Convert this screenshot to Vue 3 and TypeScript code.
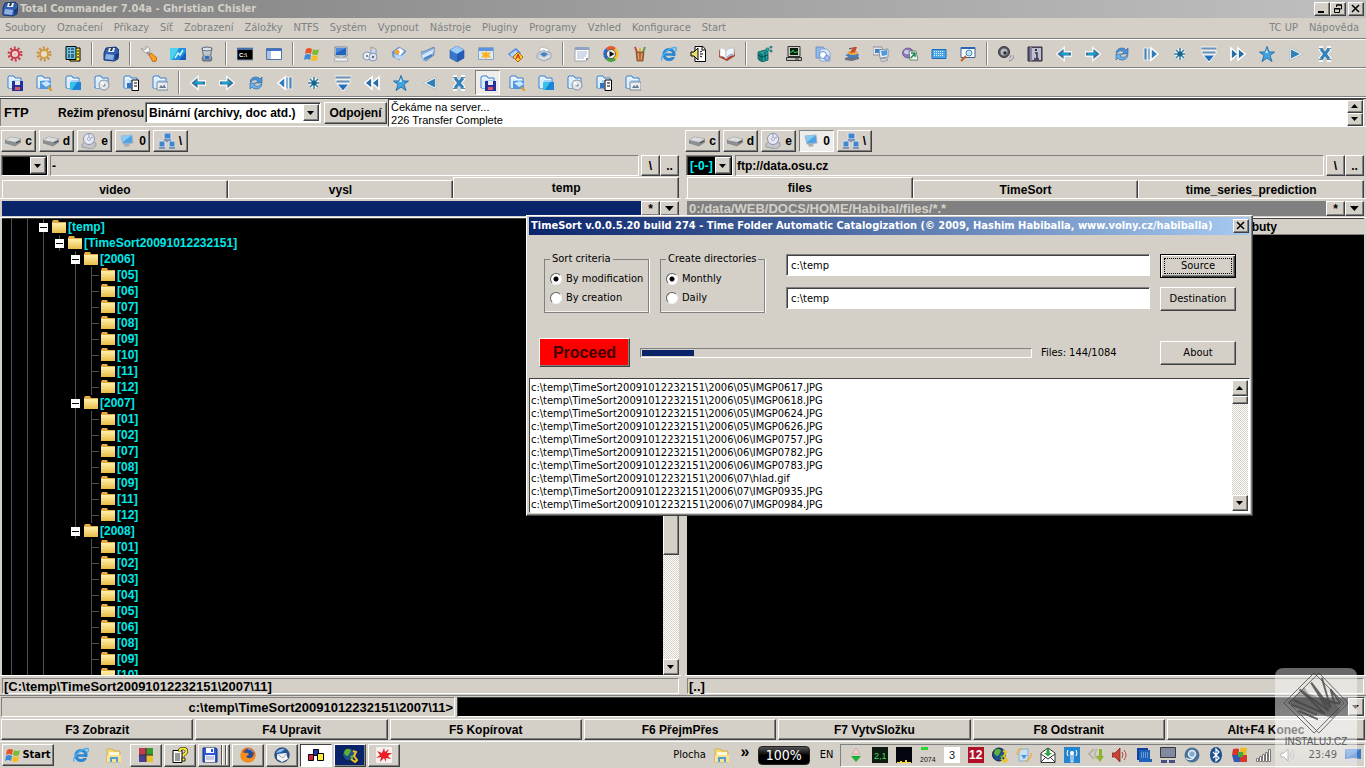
<script setup lang="ts">
import { ref, computed } from 'vue'

interface TreeNode {
  label: string
  depth: number
  guides: number[]
}
interface Badge {
  text: string
  x: number
  y: number
  size: number
  fill: string
  weight?: string
}

const menus = ['Soubory', 'Označení', 'Příkazy', 'Síť', 'Zobrazení', 'Záložky', 'NTFS', 'Systém', 'Vypnout', 'Nástroje', 'Pluginy', 'Programy', 'Vzhled', 'Konfigurace', 'Start']
const helpMenus = ['TC UP', 'Nápověda']

const toolbarTop: string[][] = [
  ['gear-red', 'gear-gold', 'notes'],
  ['floppy-tc'],
  ['wrench', 'picture', 'bin'],
  ['cmd', 'window'],
  ['flag', 'computer', 'discs', 'papers', 'folder-blue', 'cube', 'win-star', 'scan', 'printer'],
  ['notepad', 'media', 'pencils', 'ie', 'sound', 'book'],
  ['cubes', 'term', 'docs', 'stack', 'screens', 'gems', 'keyboard', 'find'],
  ['speaker', 'cabinet', 'left', 'right', 'refresh', 'bar-play', 'spark', 'drop', 'ff', 'star', 'play', 'cross'],
]
const folders = ['f-floppy', 'f-find', 'f-desk', 'f-disc', 'f-doc', 'f-img']
const toolbarBottom: string[][] = [
  folders,
  ['left', 'right', 'refresh', 'bar-rev', 'spark', 'drop', 'rw', 'star', 'rev', 'cross', ...folders],
]

const drives = [
  { icon: 'hdd', label: 'c' },
  { icon: 'hdd', label: 'd' },
  { icon: 'cdrom', label: 'e' },
  { icon: 'globe', label: '0' },
  { icon: 'net', label: '\\' },
]

const panels = [
  { key: 'l', drive: '', volume: '-', tabs: ['video', 'vysl', 'temp'], active: 2, path: '', pressed: -1, status: '[C:\\temp\\TimeSort20091012232151\\2007\\11]' },
  { key: 'r', drive: '[-0-]', volume: 'ftp://data.osu.cz', tabs: ['files', 'TimeSort', 'time_series_prediction'], active: 0, path: '0:/data/WEB/DOCS/HOME/Habibal/files/*.*', pressed: 3, status: '[..]' },
]

const years: [string, string[]][] = [
  ['2006', ['05', '06', '07', '08', '09', '10', '11', '12']],
  ['2007', ['01', '02', '07', '08', '09', '11', '12']],
  ['2008', ['01', '02', '03', '04', '05', '06', '08', '09', '10']],
]
const tree: TreeNode[] = [
  { label: '[temp]', depth: 0, guides: [0, 1, 2] },
  { label: '[TimeSort20091012232151]', depth: 1, guides: [0, 1, 2, 3] },
]
years.forEach(([year, months], i) => {
  tree.push({ label: `[${year}]`, depth: 2, guides: [0, 1, 2, 4] })
  const guides = i < years.length - 1 ? [0, 1, 2, 4, 5] : [0, 1, 2, 5]
  months.forEach((m) => tree.push({ label: `[${m}]`, depth: 3, guides }))
})

const mode = ref('Binární (archivy, doc atd.)')
const log = ref('Čekáme na server...\n226 Transfer Complete')
const command = ref('')
const fkeys = ['F3 Zobrazit', 'F4 Upravit', 'F5 Kopírovat', 'F6 PřejmPřes', 'F7 VytvSložku', 'F8 Odstranit', 'Alt+F4 Konec']

const criteria = ref('By modification')
const period = ref('Monthly')
const source = ref('c:\\temp')
const destination = ref('c:\\temp')
const done = ref(144)
const total = ref(1084)
const progress = computed(() => `${(done.value / total.value) * 100}%`)
const sorted = ['05\\IMGP0617.JPG', '05\\IMGP0618.JPG', '05\\IMGP0624.JPG', '05\\IMGP0626.JPG', '06\\IMGP0757.JPG', '06\\IMGP0782.JPG', '06\\IMGP0783.JPG', '07\\hlad.gif', '07\\IMGP0935.JPG', '07\\IMGP0984.JPG'].map((f) => `c:\\temp\\TimeSort20091012232151\\2006\\${f}`)

const tasks = [
  { icon: 'squares', cls: '' },
  { icon: 'help', cls: '' },
  { icon: 'floppy', cls: 'stacked' },
  { icon: 'firefox', cls: '' },
  { icon: 'bird', cls: '' },
  { icon: 'boxes', cls: 'on' },
  { icon: 'earth', cls: 'navy' },
  { icon: 'splat', cls: '' },
]
const tray = ['updown', 'meter', 'graph', 'fan', 'three', 'twelve', 'earth', 'sync', 'mail', 'wifi', 'transfer', 'vol-red', 'chip', 'dual', 'swirl', 'bt', 'shield', 'signal', 'vol']

// Short readings drawn on top of an icon's background
const badges: Record<string, Badge> = {
  cmd: { text: 'C:\\', x: 2, y: 11, size: 6, fill: '#fff', weight: 'bold' },
  meter: { text: '2,1', x: 2, y: 12, size: 9, fill: '#3fdc5a' },
  fan: { text: '2074', x: 0, y: 15, size: 7, fill: '#111' },
  three: { text: '3', x: 5, y: 12, size: 11, fill: '#222' },
  twelve: { text: '12', x: 1, y: 12, size: 12, fill: '#fff', weight: 'bold' },
}
</script>

<template>
  <svg class="defs" width="0" height="0" aria-hidden="true">
    <defs>
      <linearGradient id="gb" x1="0" y1="0" x2="1" y2="1"><stop offset="0" stop-color="#c4e6fb" /><stop offset="1" stop-color="#1f6fc0" /></linearGradient>
      <linearGradient id="gy" x1="0" y1="0" x2="0" y2="1"><stop offset="0" stop-color="#fff0a8" /><stop offset="1" stop-color="#e9bd4c" /></linearGradient>
      <linearGradient id="gg" x1="0" y1="0" x2="0" y2="1"><stop offset="0" stop-color="#f8f8f8" /><stop offset="1" stop-color="#77808c" /></linearGradient>
    </defs>

    <symbol id="gear-red" viewBox="0 0 16 16"><circle cx="8" cy="8" r="6" fill="none" stroke="#c93c4c" stroke-width="3" stroke-dasharray="1.9 1.87" /><circle cx="8" cy="8" r="4" fill="#f6dede" stroke="#c93c4c" stroke-width="2" /><circle cx="8" cy="8" r="1.6" fill="#e9b5b9" /></symbol>
    <symbol id="gear-gold" viewBox="0 0 16 16"><circle cx="8" cy="8" r="6" fill="none" stroke="#c68f3e" stroke-width="3" stroke-dasharray="1.9 1.87" /><circle cx="8" cy="8" r="4" fill="#e8dfcc" stroke="#d49d45" stroke-width="2" /></symbol>
    <symbol id="notes" viewBox="0 0 16 16"><path d="M5 2h10v13H5z" fill="#ffe83a" stroke="#000" /><path d="M1 .5h10v13H1z" fill="#6bc6ec" stroke="#000" /><path d="M3 3h2m1 0h3M3 6h2m1 0h3M3 9h2m1 0h3M3 11h2m1 0h3M12 5h2m-2 3h2m-2 3h2" stroke="#111" /></symbol>
    <symbol id="floppy-tc" viewBox="0 0 16 16"><path d="M3 2l10-1 3 3-1 9-4 2-10-1 0-7z" fill="#2f5fae" stroke="#1a3573" /><path d="M6 2h6l-1 4H5z" fill="#e5edf6" /><path d="M8 2h2l-1 3H7z" fill="#333" /><path d="M3 8l8 1-1 5-8-1z" fill="#8fb1e4" /><path d="M12 9l3-2v4l-3 3z" fill="#173a83" /></symbol>
    <symbol id="floppy" viewBox="0 0 16 16"><path d="M1 1h13l1 1v13H1z" fill="#2a58d8" stroke="#102c8a" /><path d="M4 1h8v5H4z" fill="#fff" /><path d="M9 2h2v3H9z" fill="#2a58d8" /><path d="M3 8h10v7H3z" fill="#f2f2f2" /><path d="M4 10h8M4 12h8" stroke="#96a5cc" /></symbol>
    <symbol id="wrench" viewBox="0 0 16 16"><path d="M0 2l3 2 2-1 0-3 3 2 1 3-1 2-3 0-3-2z" fill="#f7f7f7" stroke="#888" stroke-width=".7" /><path d="M6 6l3 3" stroke="#999" stroke-width="2.500" /><path d="M8 9l2-2 6 5-1 3-3 1z" fill="#ff9e1e" stroke="#b65c06" stroke-width=".8" /></symbol>
    <symbol id="picture" viewBox="0 0 16 16"><path d="M0 2h16v12H0z" fill="#2190dc" /><path d="M0 2h9l-7 12H0z" fill="#4ad2ee" /><path d="M5 12l3-5 2 2 3-5" fill="none" stroke="#c9fbff" stroke-width="1.500" /><path d="M9 14l7-8v8z" fill="#135ec0" /></symbol>
    <symbol id="bin" viewBox="0 0 16 16"><path d="M3 2h10l-1 5q-1 2 1 6l-1 2H4l-1-2q2-4 1-6z" fill="url(#gg)" stroke="#5d6a7c" /><ellipse cx="8" cy="3" rx="5" ry="2" fill="#d9e3ee" stroke="#5d6a7c" /><path d="M6 10h4v3H6z" fill="#2b71c5" /></symbol>
    <symbol id="cmd" viewBox="0 0 16 16"><path d="M0 2h16v12H0z" fill="#000" stroke="#7e95b5" /><path d="M0 2h16v2H0z" fill="#4a6dac" /></symbol>
    <symbol id="window" viewBox="0 0 16 16"><path d="M.5 2.500h15v11H.5z" fill="#fff" stroke="#5374a8" /><path d="M1 3h14v2H1z" fill="#3d72ca" /><path d="M1 5h4v8H1z" fill="#a9c3ea" /></symbol>
    <symbol id="flag" viewBox="0 0 16 16"><path d="M2 3q3-2 6 0L7 8Q4 6 1 8z" fill="#e8532c" /><path d="M9 3q3 2 6 0l-1 5q-3 2-6 0z" fill="#7cbb35" /><path d="M1 9q3-2 6 0l-1 5q-3-2-6 0z" fill="#3c8ad8" /><path d="M8 9q3 2 6 0l-1 5q-3 2-6 0z" fill="#f8bc20" /></symbol>
    <symbol id="computer" viewBox="0 0 16 16"><path d="M2 1h12v9H2z" fill="#dfe5ec" stroke="#76849a" /><path d="M3 2h10v7H3z" fill="#2263bd" /><path d="M3 2h10L3 7z" fill="#4c8adb" /><path d="M6 10h4v2H6z" fill="#c2c8d0" /><path d="M2 12h12l1 3H1z" fill="#f5f5f5" stroke="#8c97a7" stroke-width=".7" /></symbol>
    <symbol id="discs" viewBox="0 0 16 16"><path d="M9 1l5 2v7l-5-2z" fill="#c6dbf5" stroke="#6a88b5" stroke-width=".7" /><circle cx="5" cy="10" r="4" fill="#f0f4fa" stroke="#8595ae" /><circle cx="11" cy="11" r="4" fill="#dce6f5" stroke="#8595ae" /><circle cx="5" cy="10" r="1.200" fill="#889" /><circle cx="11" cy="11" r="1.200" fill="#667" /><path d="M9 3l3-2 1 2z" fill="#e7b948" /></symbol>
    <symbol id="papers" viewBox="0 0 16 16"><path d="M1 6l7-5 7 4-6 9-7-3z" fill="#5d9de2" stroke="#6f86b5" stroke-width=".6" /><path d="M4 5l5-3 4 3-4 5z" fill="#fff" /><circle cx="6" cy="6" r="2.500" fill="#f0a540" /><path d="M3 8l7 2 5-3-5 7-6-2z" fill="#bad7f6" /></symbol>
    <symbol id="folder-blue" viewBox="0 0 16 16"><path d="M1 6l4-1 9-4v8l-8 6z" fill="#8dbdee" stroke="#53739f" stroke-width=".7" /><path d="M3 8l12-6-3 8-8 5-3-6z" fill="#d4e8fc" stroke="#6a93c9" stroke-width=".7" /><path d="M4 13l8-4" stroke="#3f7fca" stroke-width="2" /></symbol>
    <symbol id="cube" viewBox="0 0 16 16"><path d="M8 0l7 4v8l-7 4-7-4V4z" fill="#3776ca" stroke="#2558a0" stroke-width=".6" /><path d="M8 0l7 4-7 4-7-4z" fill="#9dccf5" /><path d="M8 8l7-4v8l-7 4z" fill="#245bb5" /></symbol>
    <symbol id="win-star" viewBox="0 0 16 16"><path d="M.5 1.500h15v12H.5z" fill="#dbe9fa" stroke="#8fa5c4" /><path d="M1 2h14v3H1z" fill="#5b93de" /><path d="M8 4l1 3 4-1-2 3 2 3-4-1-1 3-1-3-4 1 2-3-2-3 4 1z" fill="#ffb11a" /></symbol>
    <symbol id="scan" viewBox="0 0 16 16"><path d="M1 8l8-6 5 5-7 6z" fill="#4c85dc" stroke="#8da9d8" /><path d="M3 8l6-4 2 2-6 5z" fill="#bbd5f8" /><path d="M11 6l5 5-5 5-5-5z" fill="#ffcd35" stroke="#b06910" /><path d="M9 13l2-5 2 5M10 11h2" fill="none" stroke="#c02a12" /></symbol>
    <symbol id="printer" viewBox="0 0 16 16"><path d="M5 1l8 2-2 5-8-3z" fill="#fff" stroke="#99a4b5" stroke-width=".6" /><path d="M1 8l6-4 8 3v5l-7 3-7-3z" fill="#c9ced6" stroke="#8d939e" stroke-width=".6" /><path d="M4 8l4-2 4 2-4 3z" fill="#3f83c8" /><path d="M3 11l5 2 6-3" fill="none" stroke="#f5f5f5" /></symbol>
    <symbol id="notepad" viewBox="0 0 16 16"><path d="M1 2h14v10l-3 3H1z" fill="#fff" stroke="#a0a6b2" /><path d="M1 1h14v3H1z" fill="#8fa4c4" /><path d="M3 6h10M3 8h10M3 10h9M3 12h7" stroke="#a9b7d0" /><path d="M15 12h-3v3z" fill="#8a96ab" /></symbol>
    <symbol id="media" viewBox="0 0 16 16"><path d="M8 8L3 2a8 8 0 0 1 10 0z" fill="#e85b28" /><path d="M8 8l5-6a8 8 0 0 1 0 12z" fill="#f7bd27" /><path d="M8 8l5 6a8 8 0 0 1-10 0z" fill="#4aa33b" /><path d="M8 8l-5 6A8 8 0 0 1 3 2z" fill="#2d67c7" /><circle cx="8" cy="8" r="4.500" fill="#f4f6fb" stroke="#444" stroke-width=".8" /><path d="M6.500 5l5 3-5 3z" fill="#111" /></symbol>
    <symbol id="pencils" viewBox="0 0 16 16"><path d="M3 1l3 8" stroke="#c8442c" stroke-width="2" /><path d="M8 2v7" stroke="#e6b540" stroke-width="2" /><path d="M13 1l-3 8" stroke="#4f9f45" stroke-width="2" /><path d="M4 6l8 0-1 9H5z" fill="#b06a3a" stroke="#774427" stroke-width=".7" /><path d="M6 7l1 7M10 7l-1 7" stroke="#e9a36b" /></symbol>
    <symbol id="ie" viewBox="0 0 16 16"><circle cx="8" cy="8.500" r="5" fill="none" stroke="#2b86d3" stroke-width="3.200" /><path d="M4 8.500h9" stroke="#2b86d3" stroke-width="2.500" /><path d="M10 11h6v-1H10z" fill="#d4d0c8" /><path d="M1 14.500C-1 12 6 2 14 1.500c3 .5 1 3 0 4" fill="none" stroke="#4eb0ef" stroke-width="1.400" /></symbol>
    <symbol id="sound" viewBox="0 0 16 16"><path d="M5 .5h8l2.500 3v12H5z" fill="#fff" stroke="#000" /><path d="M12 1v3h3" fill="none" stroke="#000" /><path d="M1 6h3l4-4v12l-4-4H1z" fill="#e8e06c" stroke="#000" /><path d="M10 6l2-1m-2 3h3m-3 2l2 1" stroke="#000" /></symbol>
    <symbol id="book" viewBox="0 0 16 16"><path d="M0 4l7 3 8-4 1 7-8 5-8-4z" fill="#ad3d2d" /><path d="M1 2q4-1 6 3v8q-2-3-6-3z" fill="#fff" stroke="#a8a8b4" stroke-width=".6" /><path d="M7 5q3-4 8-3v7q-4 0-8 4z" fill="#eef4fb" stroke="#a8a8b4" stroke-width=".6" /><path d="M8 11q3-3 6-3" stroke="#7da0c8" fill="none" /></symbol>
    <symbol id="cubes" viewBox="0 0 16 16"><path d="M1 6l7-2 3 2v8l-6 2-4-3z" fill="#20a0a0" stroke="#07504f" stroke-width=".8" /><path d="M1 9l4 2 6-2M3 7v8M8 6v8M5 8v7" stroke="#06403f" stroke-width=".8" fill="none" /><path d="M9 2h3v3H9zM13 0h2v2h-2zM13 4h2v2h-2z" fill="#2cb8b4" stroke="#07504f" stroke-width=".5" /></symbol>
    <symbol id="term" viewBox="0 0 16 16"><path d="M2 .5h12v10H2z" fill="#d0cfc8" stroke="#333" /><path d="M4 2h8v7H4z" fill="#031c0b" /><path d="M4 6h2l1-2 2 3 1-1h2" fill="none" stroke="#27d058" /><path d="M.5 11.500h15v3H.5z" fill="#c2c1bb" stroke="#333" /><path d="M9 13h4" stroke="#333" /></symbol>
    <symbol id="docs" viewBox="0 0 16 16"><path d="M1 1h7l2 2v9H1z" fill="#8ebbec" stroke="#5880bb" stroke-width=".7" /><path d="M5 3h7l3 3v9H5z" fill="#d9e7fa" stroke="#7795c5" stroke-width=".7" /><circle cx="8" cy="9" r="3.500" fill="#fff" stroke="#6a94d0" /><circle cx="12" cy="12" r="2.500" fill="#a8bff0" stroke="#5579bb" stroke-width=".7" /></symbol>
    <symbol id="stack" viewBox="0 0 16 16"><path d="M1 12l6-2 8 1v2l-7 2-7-1z" fill="#6c7280" /><path d="M1 9l6-2 8 1-1 3-7 1z" fill="#3e7fc8" /><path d="M3 6l6-2 5 2-2 3-6 0z" fill="#e8a13a" /><path d="M9 1l4 0-2 5-5 1z" fill="#c44a31" /><path d="M5 3l3-1" stroke="#444" /></symbol>
    <symbol id="screens" viewBox="0 0 16 16"><path d="M0 1h9v8H0z" fill="#e3e6ec" stroke="#7a828f" stroke-width=".8" /><path d="M2 3h6v4H2z" fill="#3b85cb" /><path d="M6 4l9-1v8l-8 1z" fill="#eef0f4" stroke="#7a828f" stroke-width=".8" /><path d="M8 5l6-1v5l-5 1z" fill="#4d9ade" /><path d="M7 13l6-1 2 2-6 2z" fill="#cbd0d8" stroke="#7a828f" stroke-width=".6" /></symbol>
    <symbol id="gems" viewBox="0 0 16 16"><ellipse cx="6" cy="7" rx="5.500" ry="5" fill="#8f78b9" stroke="#5d4a82" stroke-width=".7" /><ellipse cx="5" cy="6" rx="3" ry="2" fill="#d5c8ee" /><path d="M7 5h7l2 9H8z" fill="#f2f6f4" stroke="#49705a" stroke-width=".8" /><path d="M9 12l4-5m0 0v4m0-4H9" stroke="#238a53" stroke-width="1.500" fill="none" /></symbol>
    <symbol id="keyboard" viewBox="0 0 16 16"><path d="M1 3.500h14v9H1z" fill="#4fa6e6" stroke="#1f6cb4" /><path d="M3 5.500h10M3 7.500h10M3 9.500h10" stroke="#e1f3ff" stroke-dasharray="1 1" /></symbol>
    <symbol id="find" viewBox="0 0 16 16"><path d="M1 1.500h14v10H1z" fill="#fff" stroke="#40608f" /><path d="M1 1h14v2H1z" fill="#2d63b3" /><circle cx="9" cy="7" r="3" fill="#c1e4fa" stroke="#4889bf" /><path d="M6 10l-5 5" stroke="#c2612a" stroke-width="2" /></symbol>
    <symbol id="speaker" viewBox="0 0 16 16"><ellipse cx="6" cy="6" rx="5.500" ry="5.500" fill="#55585f" stroke="#34363b" /><circle cx="6" cy="6" r="3.500" fill="#b5b8be" /><circle cx="7" cy="7" r="1.700" fill="#2a2b30" /><path d="M11 12q2 0 2-3M11 15q5-1 5-6" stroke="#8989a8" fill="none" /></symbol>
    <symbol id="cabinet" viewBox="0 0 16 16"><path d="M1 1h14v14H1z" fill="#5c5774" stroke="#302e40" /><path d="M4 1v14" stroke="#b6b3c8" /><path d="M5 2h9v12H5z" fill="#c0bfd0" /><path d="M8 7h2v6m-3 0h5" stroke="#333044" stroke-width="1.500" fill="none" /><path d="M8 3h2v2H8z" fill="#333044" /></symbol>
    <symbol id="left" viewBox="0 0 16 16"><path d="M1 8l7-6v4h7v4H8v4z" fill="#fff" stroke="#f2f4f6" stroke-width="2" /><path d="M1.500 8l6-5v3.500H15v3H7.500V13z" fill="#3d6c98" /><path d="M4 8l3-3v2h6v2H6z" fill="#0aa6cb" /></symbol>
    <symbol id="right" viewBox="0 0 16 16"><path d="M15 8L8 2v4H1v4h7v4z" fill="#fff" stroke="#f2f4f6" stroke-width="2" /><path d="M14.500 8l-6-5v3.500H1v3h7.500V13z" fill="#3d6c98" /><path d="M12 8L9 5v2H3v2h7z" fill="#0aa6cb" /></symbol>
    <symbol id="refresh" viewBox="0 0 16 16"><path d="M2 7q1-5 6-5 3 0 4 2l2-2v6H8l2-2q-4-3-7 1z" fill="#4f92d2" stroke="#2561a0" stroke-width=".6" /><path d="M14 9q-1 5-6 5-3 0-4-2l-2 2V8h6l-2 2q4 3 7-1z" fill="#6db0e6" stroke="#2561a0" stroke-width=".6" /></symbol>
    <symbol id="bar-play" viewBox="0 0 16 16"><path d="M1 2h3v12H1zM5 2h2v12H5z" fill="#4d87b5" stroke="#fff" stroke-width=".7" /><path d="M8 2l7 6-7 6z" fill="#2f7cba" stroke="#fff" stroke-width="1.500" /></symbol>
    <symbol id="bar-rev" viewBox="0 0 16 16"><path d="M12 2h3v12h-3zM9 2h2v12H9z" fill="#4d87b5" stroke="#fff" stroke-width=".7" /><path d="M8 2L1 8l7 6z" fill="#2f7cba" stroke="#fff" stroke-width="1.500" /></symbol>
    <symbol id="spark" viewBox="0 0 16 16"><path d="M8 2v12M2 8h11M4 4l8 8M12 4l-8 8" stroke="#f8f8f8" stroke-width="3" /><path d="M8 2v12M2 8h11M4 4l8 8M12 4l-8 8" stroke="#327ba3" stroke-width="1.500" /><circle cx="8" cy="8" r="2.500" fill="#14658c" /></symbol>
    <symbol id="drop" viewBox="0 0 16 16"><path d="M0 1h16v3H0zM1 5h14v3H1z" fill="#6f93b5" stroke="#fff" stroke-width=".8" /><path d="M2 9h12l-6 7z" fill="#2471bb" stroke="#fff" /></symbol>
    <symbol id="ff" viewBox="0 0 16 16"><path d="M1 2l7 6-7 6zM8 2l7 6-7 6z" fill="#6cb3e0" stroke="#fff" stroke-width="1.500" /><path d="M2 4l5 4-5 4zM9 4l5 4-5 4z" fill="#2a6ca4" /></symbol>
    <symbol id="rw" viewBox="0 0 16 16"><path d="M15 2L8 8l7 6zM8 2L1 8l7 6z" fill="#6cb3e0" stroke="#fff" stroke-width="1.500" /><path d="M14 4L9 8l5 4zM7 4L2 8l5 4z" fill="#2a6ca4" /></symbol>
    <symbol id="star" viewBox="0 0 16 16"><path d="M8 .5l2 5.500h5.500l-4.500 3.500L13 15.500l-5-3.500-5 3.500 2-6L.5 6H6z" fill="#41a5e0" stroke="#1f6aa6" stroke-width=".9" /><path d="M8 3l1 4H6z" fill="#c5ecff" /></symbol>
    <symbol id="play" viewBox="0 0 16 16"><path d="M2 1.500l13 6.500-13 6.500z" fill="#fff" stroke="#b4bcc6" /><path d="M3 3.500l9 4.500-9 4.500z" fill="#3180b8" /></symbol>
    <symbol id="rev" viewBox="0 0 16 16"><path d="M14 1.500L1 8l13 6.500z" fill="#fff" stroke="#b4bcc6" /><path d="M13 3.500L4 8l9 4.500z" fill="#3180b8" /></symbol>
    <symbol id="cross" viewBox="0 0 16 16"><path d="M3 3l10 10M13 3L3 13M2 2h4M10 2h4M2 14h4M10 14h4" stroke="#f6f9fb" stroke-width="4.500" /><path d="M4 3l8 10M12 3L4 13" stroke="#3281b8" stroke-width="3" /><path d="M2 2.500h4M10 2.500h4M2 13.500h4M10 13.500h4" stroke="#5689ae" /></symbol>

    <symbol id="f-base" viewBox="0 0 16 16"><path d="M1 2l1-1h5l1 2h6v10H1z" fill="#eaf5fe" stroke="#3b7fcb" /><path d="M2 5h11v8H2z" fill="#a9d2f6" /><path d="M2 5l4-2v10H2z" fill="#d9edfd" /></symbol>
    <symbol id="f-floppy" viewBox="0 0 16 16"><use href="#f-base" /><path d="M5 6h11v10H5z" fill="#25319a" /><path d="M8 6h5v4H8z" fill="#e9e9f2" /><path d="M8 12h5v3H8z" fill="#e05762" /></symbol>
    <symbol id="f-find" viewBox="0 0 16 16"><use href="#f-base" /><path d="M4 6h11v8H4z" fill="#4e98dd" /><path d="M5 8l6-2 4 3-5 3z" fill="#c7e6ff" /><path d="M12 12l4 4" stroke="#e39b1c" stroke-width="2" /></symbol>
    <symbol id="f-desk" viewBox="0 0 16 16"><use href="#f-base" /><path d="M5 7h11v8H5z" fill="#1b84d6" /><path d="M5 7h7l-5 8H5z" fill="#34c2e8" /></symbol>
    <symbol id="f-disc" viewBox="0 0 16 16"><use href="#f-base" /><circle cx="10" cy="10" r="5" fill="#e3e6ea" stroke="#8a929d" /><circle cx="10" cy="10" r="1.500" fill="#7a8390" /><path d="M7 7l3 3" stroke="#fff" stroke-width="2" /></symbol>
    <symbol id="f-doc" viewBox="0 0 16 16"><use href="#f-base" /><path d="M9 5h6.500v10.500H9z" fill="#fff" stroke="#000" /><path d="M4 8h4v5H4z" fill="#2f74c4" /><path d="M11 8h3m-3 3h3" stroke="#000" /></symbol>
    <symbol id="f-img" viewBox="0 0 16 16"><use href="#f-base" /><path d="M5 7h11v8H5z" fill="#eceff2" stroke="#7c8796" /><path d="M7 13l2-3 2 2 1-3 2 4z" fill="#66788e" /></symbol>

    <symbol id="hdd" viewBox="0 0 16 16"><path d="M0 7l6-3 10 2v3l-6 4L0 10z" fill="#8d9093" stroke="#6c6e70" stroke-width=".5" /><path d="M0 7l6-3 10 2-6 3z" fill="#dadcdd" /><path d="M11 10l4-2" stroke="#444" /></symbol>
    <symbol id="cdrom" viewBox="0 0 16 16"><path d="M1 11l4-3 10 2v3l-4 3-10-2z" fill="#c4c6ca" stroke="#7e8188" stroke-width=".6" /><circle cx="8" cy="6" r="5.500" fill="#e8e9f7" stroke="#8f92a5" /><circle cx="8" cy="6" r="1.500" fill="#fff" stroke="#777" stroke-width=".6" /><path d="M8 1v3M12 4l-2 1" stroke="#a8b5e2" stroke-width="1.500" /></symbol>
    <symbol id="globe" viewBox="0 0 16 16"><path d="M2 3l11-1 1 8-10 1z" fill="#4ea3e2" stroke="#a4b6c6" /><path d="M2 3l11-1-9 7z" fill="#89c9f2" /><path d="M5 11l5 0 1 2-5 1z" fill="#a9afb7" /></symbol>
    <symbol id="net" viewBox="0 0 16 16"><path d="M8 5v4M4 11V8h8v3" stroke="#5a7bb6" fill="none" /><path d="M5 0h7v6H5zM0 8h6v6H0zM10 8h6v6h-6z" fill="#3f86cc" stroke="#dfe7f2" /><path d="M5 6h7v2H5zM0 14h6v2H0zM10 14h6v2h-6z" fill="#8494b5" /></symbol>
    <symbol id="folder" viewBox="0 0 16 16"><path d="M1 3l1-2h5l1 2h7v11H1z" fill="#e2ad46" /><path d="M1 4h14v10H1z" fill="url(#gy)" /></symbol>
    <symbol id="folder-open" viewBox="0 0 16 16"><path d="M1 2h6l1 2h6v11H1z" fill="#f6d76f" stroke="#c9a33b" stroke-width=".7" /><path d="M3 5h10v5H3z" fill="#fff8dc" /><path d="M1 8h14v7H1z" fill="#f9e290" /><path d="M4 15V10h8v5h-2v-3H6v3z" fill="#4f9fdc" /></symbol>

    <symbol id="squares" viewBox="0 0 16 16"><path d="M1 1h7v7H1z" fill="#c23b4b" /><path d="M8 1h7v7H8z" fill="#3c9a2d" /><path d="M1 8h7v7H1z" fill="#473f98" /><path d="M8 8h7v7H8z" fill="#e6c32c" /><path d="M1 8h14M8 1v14" stroke="#3a2b3a" /></symbol>
    <symbol id="help" viewBox="0 0 16 16"><path d="M1 3.500h9v12H1z" fill="#fff" stroke="#000" /><path d="M3 7h5M3 9h5M3 11h5M3 13h5" stroke="#333" /><path d="M7.500 4.500q0-3 3.500-3t3.500 2.500-3 3.500v2" fill="none" stroke="#000" stroke-width="3" /><path d="M7.500 4.500q0-3 3.500-3t3.500 2.500-3 3.500v2" fill="none" stroke="#ffee35" stroke-width="2" /><path d="M10 11h3v3h-3z" fill="#ffee35" stroke="#000" stroke-width=".8" /></symbol>
    <symbol id="firefox" viewBox="0 0 16 16"><circle cx="8" cy="8" r="7.500" fill="#e06413" /><circle cx="8.500" cy="7" r="5" fill="#284d99" /><path d="M1 4q2 0 3 2 3-1 5 1-1 2-3 2 1 3 5 2 3-1 3-5 3 9-6 9T1 8z" fill="#f58e1c" /><path d="M8 2q4 0 5 3" stroke="#7fb3ea" fill="none" /></symbol>
    <symbol id="bird" viewBox="0 0 16 16"><circle cx="8" cy="8" r="7.300" fill="#235595" stroke="#132d5a" stroke-width=".6" /><path d="M3 7l9-1 2 6-6 3-5-3z" fill="#f4f4f4" /><path d="M3 7l6 4 4-5" fill="none" stroke="#a3adbc" /><path d="M2 6q3-5 9-4l-4 3z" fill="#8bbdea" /></symbol>
    <symbol id="boxes" viewBox="0 0 16 16"><path d="M5.500 2.500h5v6h-5z" fill="#1b36a4" stroke="#000" /><path d="M.5 7.500h5v6h-5z" fill="#e1223d" stroke="#000" /><path d="M9.500 6.500h6v7h-6z" fill="#ffed33" stroke="#000" /></symbol>
    <symbol id="earth" viewBox="0 0 16 16"><circle cx="7" cy="7.500" r="6.500" fill="#1d4e8e" stroke="#0a2138" /><path d="M3 3q4-3 6 1L6 9q-3 0-4-3zM8 9l4-1-2 5z" fill="#5fb035" /><path d="M11 4l3 1-2 4 3 4-2 2-4-3" fill="none" stroke="#f0c31c" stroke-width="2" /></symbol>
    <symbol id="splat" viewBox="0 0 16 16"><path d="M0 0h16v16H0z" fill="#f6f1ee" /><path d="M8 1l1 4 4-3-2 4 5 0-4 3 3 3-5-1 0 4-2-4-4 4 1-5-5 1 4-3-3-4 5 2z" fill="#e81f25" /></symbol>

    <symbol id="updown" viewBox="0 0 16 16"><path d="M4 7l4-6 4 6z" fill="#f7cfcf" stroke="#c99" stroke-width=".7" /><path d="M3 9h10l-5 6z" fill="#1fae35" /></symbol>
    <symbol id="meter" viewBox="0 0 16 16"><path d="M0 0h16v16H0z" fill="#0c1c12" /></symbol>
    <symbol id="graph" viewBox="0 0 16 16"><path d="M0 0h16v16H0z" fill="#04050e" /><path d="M1 16v-1h3v-1h2v1h3v-2h2v2h4v1z" fill="#f5dd25" /></symbol>
    <symbol id="fan" viewBox="0 0 16 16"><path d="M1 0h7v3H1z" fill="#2ad632" /></symbol>
    <symbol id="three" viewBox="0 0 16 16"><path d="M0 0h16v16H0z" fill="#fff" /></symbol>
    <symbol id="twelve" viewBox="0 0 16 16"><path d="M0 0h16v16H0z" fill="#b01225" /></symbol>
    <symbol id="sync" viewBox="0 0 16 16"><path d="M3 2h9v12H3z" fill="#c5e1f5" stroke="#719cc4" stroke-width=".7" /><path d="M1 8q0-5 5-6M15 6q1 5-5 8" stroke="#f0b243" stroke-width="1.600" fill="none" /><path d="M5 8h6l-3 4z" fill="#4d8fd2" /></symbol>
    <symbol id="mail" viewBox="0 0 16 16"><path d="M1 6l7-5 7 5v9.500H1z" fill="#fff" stroke="#333" /><path d="M1 15l5-5M15 15l-5-5M1 7l7 5 7-5" stroke="#333" fill="none" /><path d="M6.500 2h3v4H12L8 9.500 4 6h2.500z" fill="#29a33c" /></symbol>
    <symbol id="wifi" viewBox="0 0 16 16"><path d="M0 0h16v16H0z" fill="#2385cd" /><circle cx="8" cy="6" r="2" fill="#fff" /><path d="M7 7h2v8H7zM4 3q-2 3 0 6M12 3q2 3 0 6" stroke="#fff" fill="none" /></symbol>
    <symbol id="transfer" viewBox="0 0 16 16"><path d="M6 2L1 7l5 5M9 2q-4 5 0 10" stroke="#b7b7a3" stroke-width="2" fill="none" /><path d="M11 2h3v7h2l-4 6-4-6h3z" fill="#8cb32c" /></symbol>
    <symbol id="vol-red" viewBox="0 0 16 16"><path d="M0 6h3l5-5v14l-5-5H0z" fill="#c74435" stroke="#7d1f18" stroke-width=".7" /><path d="M10 5q2 3 0 6M12 3q4 5 0 10" stroke="#b4463a" fill="none" /></symbol>
    <symbol id="chip" viewBox="0 0 16 16"><path d="M1 1h11v12H1z" fill="#133f9b" /><path d="M3 3h11v9h2v3H3z" fill="#1f63b8" /><path d="M5 6h7M5 8h7M5 10h7" stroke="#a9d0f7" stroke-dasharray="1 1" /></symbol>
    <symbol id="dual" viewBox="0 0 16 16"><path d="M.5 .5h15v10H.5z" fill="#83889c" stroke="#333846" /><path d="M1 13h6v3H1zM9 13h6v3H9z" fill="#45517c" /></symbol>
    <symbol id="swirl" viewBox="0 0 16 16"><circle cx="8" cy="8" r="7.500" fill="#4a7097" /><circle cx="8" cy="7" r="3.500" fill="#86aacd" stroke="#e6f1fb" stroke-width="1.500" /><path d="M2 11q4 3 8 0" stroke="#e6f1fb" stroke-width="1.500" fill="none" /></symbol>
    <symbol id="bt" viewBox="0 0 16 16"><ellipse cx="8" cy="8" rx="6" ry="8" fill="#1c4f8f" /><path d="M5 5l6 6-3 3V2l3 3-6 6" fill="none" stroke="#fff" stroke-width="1.200" /></symbol>
    <symbol id="shield" viewBox="0 0 16 16"><path d="M1 2q4-1 6 0l0 6H0z" fill="#d7362b" /><path d="M8 1q4-1 7 0l-1 7H8z" fill="#e9bd26" /><path d="M0 8h8v7H2z" fill="#3258b4" /><path d="M8 8h7v7l-7 0z" fill="#d7362b" /><path d="M6 5h5v5H6z" fill="#3faa45" /></symbol>
    <symbol id="signal" viewBox="0 0 16 16"><path d="M.5 11.500h2v3h-2zM3.500 9.500h2v5h-2zM6.500 7.500h2v7h-2zM9.500 5.500h2v9h-2zM12.500 2.500h2v12h-2z" fill="#fff" stroke="#777" /></symbol>
    <symbol id="vol" viewBox="0 0 16 16"><path d="M1 6h3l4-4v12l-4-4H1z" fill="#fff" stroke="#888" /><path d="M10 5q2 3 0 6M12 3q4 5 0 10" stroke="#aaa" fill="none" /></symbol>
    <symbol id="desk" viewBox="0 0 16 16"><path d="M0 2h16v10l-8-1-8 1z" fill="#3d77c6" /><path d="M0 2h16L2 11z" fill="#5c95da" /><path d="M2 13h11v2H2z" fill="#c6cedb" /></symbol>
    <symbol id="down" viewBox="0 0 8 4"><path d="M0 0h7L3.500 4z" fill="#000" /></symbol>
    <symbol id="up" viewBox="0 0 8 4"><path d="M0 4h7L3.500 0z" fill="#000" /></symbol>
  </svg>

  <div class="app">
    <header class="title">
      <svg class="ic"><use href="#floppy-tc" /></svg>
      <h1>Total Commander 7.04a - Ghristian Chisler</h1>
      <button class="b3 wb" aria-label="Minimalizovat"><svg viewBox="0 0 10 10"><path d="M1 8h6" stroke="#000" stroke-width="2" /></svg></button>
      <button class="b3 wb" aria-label="Obnovit"><svg viewBox="0 0 10 10"><path d="M3.500 3V1h5v4H7M3 1h6M1.500 4.500h5v4h-5zM1 5h6" fill="none" stroke="#000" /></svg></button>
      <button class="b3 wb last" aria-label="Zavřít"><svg viewBox="0 0 10 10"><path d="M1 1l7 7M8 1L1 8" stroke="#000" stroke-width="1.500" /></svg></button>
    </header>

    <nav class="menu">
      <a v-for="m in menus" :key="m" href="#">{{ m }}</a>
      <span class="grow"></span>
      <a v-for="m in helpMenus" :key="m" href="#">{{ m }}</a>
    </nav>

    <div v-for="(bar, bi) in [toolbarTop, toolbarBottom]" :key="bi" class="toolbar">
      <div v-for="(group, gi) in bar" :key="gi" class="group">
        <button v-for="(icon, ii) in group" :key="ii" :class="['tool', { pressed: bi === 1 && gi === 1 && ii === 10 }]" :aria-label="icon">
          <svg class="ic">
            <use :href="'#' + icon" />
            <text v-if="badges[icon]" :x="badges[icon].x" :y="badges[icon].y" :font-size="badges[icon].size" :font-weight="badges[icon].weight" :fill="badges[icon].fill">{{ badges[icon].text }}</text>
          </svg>
        </button>
      </div>
    </div>

    <section class="ftp">
      <span class="ftp-name">FTP</span>
      <label for="mode">Režim přenosu</label>
      <div class="combo mode">
        <select id="mode" v-model="mode"><option>Binární (archivy, doc atd.)</option></select>
        <span class="b3 arrow"><svg><use href="#down" /></svg></span>
      </div>
      <button class="b3 disconnect">Odpojení</button>
      <div class="log">
        <textarea v-model="log" readonly rows="2" aria-label="FTP"></textarea>
        <div class="spin">
          <button class="b3" aria-label="Nahoru"><svg><use href="#up" /></svg></button>
          <button class="b3" aria-label="Dolů"><svg><use href="#down" /></svg></button>
        </div>
      </div>
    </section>

    <main class="panels">
      <section v-for="p in panels" :key="p.key" :class="['panel', p.key]">
        <div class="drives">
          <button v-for="(d, i) in drives" :key="i" :class="['b3', 'drive', { sunk: i === p.pressed }]">
            <svg class="ic"><use :href="'#' + d.icon" /></svg><span>{{ d.label }}</span>
          </button>
        </div>
        <div class="volume">
          <div class="combo dark">
            <select :aria-label="p.volume"><option>{{ p.drive }}</option></select>
            <span class="b3 arrow"><svg><use href="#down" /></svg></span>
          </div>
          <span class="field">{{ p.volume }}</span>
          <button class="b3 sq">\</button>
          <button class="b3 sq">..</button>
        </div>
        <div class="tabs">
          <button v-for="(t, i) in p.tabs" :key="t" :class="['tab', { active: i === p.active }]">{{ t }}</button>
        </div>
        <div class="path">
          <span class="dir">{{ p.path }}</span>
          <button class="b3 sq">*</button>
          <button class="b3 sq" aria-label="Historie"><svg class="big"><use href="#down" /></svg></button>
        </div>
        <div v-if="p.key === 'l'" class="listing">
          <ul class="tree">
            <li v-for="(n, i) in tree" :key="i" :class="'d' + n.depth">
              <i v-for="c in 6" :key="c" :class="{ guide: n.guides.includes(c - 1), skip: c - 1 > n.depth + 2 }"></i>
              <b v-if="n.depth < 3" class="minus"></b>
              <svg class="ic"><use href="#folder" /></svg>
              <span>{{ n.label }}</span>
            </li>
          </ul>
          <div class="scroll">
            <button class="b3 end" aria-label="Nahoru"><svg><use href="#up" /></svg></button>
            <span class="gap"></span>
            <span class="b3 thumb"></span>
            <span class="rest"></span>
            <button class="b3 end" aria-label="Dolů"><svg><use href="#down" /></svg></button>
          </div>
        </div>
        <div v-else class="listing remote"><div class="columns">Atributy</div></div>
        <div class="status"><span>{{ p.status }}</span></div>
      </section>
    </main>

    <div class="command">
      <label for="cmdline">c:\temp\TimeSort20091012232151\2007\11&gt;</label>
      <div class="cmd-box">
        <input id="cmdline" v-model="command" type="text" />
        <button class="b3 arrow" aria-label="Historie příkazů"><svg><use href="#down" /></svg></button>
      </div>
    </div>

    <div class="fkeys"><button v-for="k in fkeys" :key="k" class="b3">{{ k }}</button></div>

    <footer class="taskbar">
      <button class="b3 start"><svg class="ic"><use href="#flag" /></svg>Start</button>
      <button class="quick" aria-label="Internet"><svg class="ic"><use href="#ie" /></svg></button>
      <button class="quick" aria-label="Průzkumník"><svg class="ic"><use href="#folder-open" /></svg></button>
      <button v-for="t in tasks" :key="t.icon" :class="['b3', 'task', t.cls]" :aria-label="t.icon"><svg class="ic"><use :href="'#' + t.icon" /></svg></button>
      <span class="grow"></span>
      <span class="desktop">Plocha</span>
      <svg class="ic"><use href="#folder-open" /></svg>
      <span class="more">»</span>
      <span class="battery">100%</span>
      <span class="lang">EN</span>
      <div class="tray">
        <svg v-for="t in tray" :key="t" class="ic">
          <use :href="'#' + t" />
          <text v-if="badges[t]" :x="badges[t].x" :y="badges[t].y" :font-size="badges[t].size" :font-weight="badges[t].weight" :fill="badges[t].fill">{{ badges[t].text }}</text>
        </svg>
        <time>23:49</time>
        <svg class="ic"><use href="#desk" /></svg>
      </div>
    </footer>

    <section class="dialog" role="dialog" aria-labelledby="dlg">
      <header>
        <h2 id="dlg">TimeSort v.0.0.5.20 build 274 - Time Folder Automatic Catalogization (© 2009, Hashim Habiballa, www.volny.cz/habiballa)</h2>
        <button class="b3 wb" aria-label="Close"><svg viewBox="0 0 10 10"><path d="M1 1l7 7M8 1L1 8" stroke="#000" stroke-width="1.500" /></svg></button>
      </header>
      <div class="options">
        <fieldset>
          <legend>Sort criteria</legend>
          <label v-for="o in ['By modification', 'By creation']" :key="o"><input v-model="criteria" type="radio" name="criteria" :value="o" />{{ o }}</label>
        </fieldset>
        <fieldset>
          <legend>Create directories</legend>
          <label v-for="o in ['Monthly', 'Daily']" :key="o"><input v-model="period" type="radio" name="period" :value="o" />{{ o }}</label>
        </fieldset>
        <div class="paths">
          <input v-model="source" type="text" aria-label="Source" /><button class="b3 focus"><span>Source</span></button>
          <input v-model="destination" type="text" aria-label="Destination" /><button class="b3">Destination</button>
        </div>
      </div>
      <div class="run">
        <button class="b3 proceed">Proceed</button>
        <div class="bar" role="progressbar" :aria-valuenow="done" :aria-valuemax="total"><div :style="{ width: progress }"></div></div>
        <span class="count">Files: {{ done }}/{{ total }}</span>
        <button class="b3">About</button>
      </div>
      <div class="output">
        <ul><li v-for="s in sorted" :key="s">{{ s }}</li></ul>
        <div class="scroll">
          <button class="b3 end" aria-label="Up"><svg><use href="#up" /></svg></button>
          <span class="b3 nub"></span>
          <span class="rest"></span>
          <button class="b3 end" aria-label="Down"><svg><use href="#down" /></svg></button>
        </div>
      </div>
    </section>

    <div class="mark">
      <svg viewBox="0 0 66 66" fill="none" stroke="#444" stroke-opacity=".8">
        <path d="M31 2L62 33 31 64 0 33z" />
        <path d="M36 2L5 33l31 31 30-31z" />
        <path d="M3 33l18-16 4 6 30 12 3 5-8 9zM12 29l30 14" fill="#333" fill-opacity=".35" stroke="none" />
        <path d="M10 30l32 14-26-25 30 22L28 12l20 26-9-31M8 35l26 10M15 41l20 9M38 27l14 6-4-14 10 14M46 31l12 3" stroke-width="2" />
      </svg>
      <span>INSTALUJ.CZ</span>
    </div>
  </div>
</template>

<style>
html, body { margin: 0; background: #d4d0c8; }
</style>

<style scoped>
* { box-sizing: border-box; }
.defs { position: absolute; }
.app { position: relative; display: flex; flex-direction: column; height: 100vh; overflow: hidden; background: #d4d0c8; color: #000; font: bold 12px/16px "Liberation Sans", sans-serif; white-space: nowrap; }
button, input, select, textarea { font: inherit; color: inherit; padding: 0; margin: 0; border-radius: 0; }
button { background: #d4d0c8; border: 0; display: flex; align-items: center; justify-content: center; white-space: nowrap; }
ul { list-style: none; margin: 0; padding: 0; }
svg { display: block; flex: none; }
svg text { font-family: "Liberation Sans", sans-serif; font-weight: normal; }
svg text[font-weight="bold"] { font-weight: bold; }
.ic { width: 16px; height: 16px; }
.grow { flex: 1; }
.b3 { background: #d4d0c8; border: 1px solid; border-color: #fff #404040 #404040 #fff; box-shadow: inset -1px -1px 0 #808080; }
.b3 > svg:not(.ic) { width: 8px; height: 4px; }
.b3 > svg.big { width: 10px; height: 5px; }

.title { display: flex; align-items: center; height: 18px; flex: none; background: linear-gradient(90deg, #808080, #c0c0c0); color: #d4d0c8; padding: 0 2px; font-family: "DejaVu Sans Condensed", "DejaVu Sans", sans-serif; }
.title .ic { margin-right: 2px; }
h1, h2 { margin: 0; flex: 1; font-size: 11px; line-height: 16px; font-weight: bold; }
.wb { width: 16px; height: 14px; }
.b3.wb > svg { width: 10px; height: 10px; }
.wb.last { margin-left: 2px; }

.menu { display: flex; flex: none; align-items: center; gap: 11px; height: 21px; padding: 0 7px 0 5px; border-bottom: 1px solid #808080; font: 11px/16px "DejaVu Sans Condensed", "DejaVu Sans", sans-serif; }
.menu a { color: #808080; text-decoration: none; }

.toolbar { display: flex; flex: none; height: 29px; border-top: 1px solid #fff; border-bottom: 1px solid #808080; }
.group { display: flex; align-items: center; }
.group + .group::before { content: ""; width: 9px; height: 23px; background: linear-gradient(90deg, transparent 4px, #808080 4px, #808080 5px, #fff 5px, #fff 6px, transparent 6px); }
.tool { width: 25px; height: 25px; margin: 0 2px; }
.tool.pressed { background: #efedea; border: 1px solid; border-color: #808080 #fff #fff #808080; }

.ftp { display: flex; flex: none; align-items: center; height: 30px; border-top: 1px solid #fff; border-bottom: 1px solid #fff; box-shadow: inset 0 1px 0 #404040, inset 1px 0 0 #808080; padding: 1px 2px 0 4px; }
.ftp-name { width: 54px; font-size: 13px; }
.combo { position: relative; display: flex; background: #fff; border: 1px solid; border-color: #808080 #fff #fff #808080; box-shadow: inset 1px 1px 0 #404040; }
.combo select { appearance: none; border: 0; background: transparent; width: 100%; padding: 0 0 0 3px; outline: 0; }
.arrow { display: flex; align-items: center; justify-content: center; width: 16px; }
.combo .arrow { position: absolute; right: 1px; top: 1px; bottom: 1px; pointer-events: none; }
.mode { width: 176px; height: 21px; margin-left: 1px; }
.disconnect { width: 63px; height: 22px; margin: 0 1px 0 3px; }
.log { display: flex; flex: 1; height: 28px; background: #fff; border: 1px solid; border-color: #404040 #fff #fff #404040; }
.log textarea { flex: 1; resize: none; border: 0; outline: 0; overflow: hidden; background: #fff; padding: 1px 2px; font: 11px/13px "Liberation Sans", sans-serif; height: 27px; }
.spin { display: flex; flex-direction: column; width: 16px; }
.spin button { flex: 1; }

.panels { display: flex; flex: 1; min-height: 0; gap: 4px; }
.panel { flex: 1; min-width: 0; display: flex; flex-direction: column; }
.drives { display: flex; flex: none; gap: 3px; height: 28px; padding: 3px 1px; }
.panel.r .drives { padding-left: 0; }
.drive { width: 35px; gap: 4px; }
.drive.sunk { border-color: #808080 #fff #fff #808080; box-shadow: none; background: #efedea; }
.volume { display: flex; flex: none; height: 23px; padding: 0 2px 2px 1px; }
.dark { width: 47px; background: #000; color: #00f0f0; margin-right: 2px; }
.dark option { color: #00f0f0; background: #000; }
.field { flex: 1; padding: 2px 2px 2px 1px; margin-right: 2px; border: 1px solid; border-color: #808080 #fff #fff #808080; }
.sq { width: 19px; }
.tabs { display: flex; flex: none; align-items: flex-end; height: 21px; padding: 0 2px; border-bottom: 1px solid #fff; }
.tab { flex: 1; height: 18px; border: 1px solid; border-color: #fff #404040 transparent #fff; box-shadow: inset -1px 0 0 #808080; border-bottom: 0; }
.tab.active { height: 21px; padding-bottom: 1px; }
.path { display: flex; flex: none; height: 19px; padding: 2px 2px 1px; border-bottom: 1px solid #fff; }
.dir { flex: 1; min-width: 0; background: #0a246a; padding-left: 2px; font-size: 13px; line-height: 15px; color: #d4d0c8; }
.panel.r .dir { background: #808080; }
.listing { display: flex; flex: 1; min-height: 0; margin: 0 2px; background: #000; border-top: 1px solid #404040; }
.tree { flex: 1; overflow: hidden; color: #00e8e8; padding-left: 3px; }
.tree li { display: flex; align-items: center; height: 16px; }
.tree i { position: relative; width: 16px; height: 16px; flex: none; }
.tree i.guide { background: linear-gradient(90deg, transparent 6px, #505050 6px, #505050 7px, transparent 7px); }
.tree i.skip { display: none; }
.tree .minus { width: 9px; height: 9px; margin: 0 3px 0 -14px; border: 4px solid #fff; border-width: 4px 1px; background: #000; z-index: 1; flex: none; }
.tree .ic { margin-right: 1px; }
.d3 .ic { margin-left: -1px; }
.d3 i:nth-child(6)::after { content: ""; position: absolute; left: 7px; top: 8px; width: 7px; height: 1px; background: #505050; }
.scroll { display: flex; flex-direction: column; width: 16px; flex: none; background: repeating-conic-gradient(#fff 0 25%, #d4d0c8 0 50%) 0 0 / 2px 2px; }
.end { height: 16px; flex: none; }
.gap { flex: 248; }
.thumb { flex: 72; }
.rest { flex: 105; }
.columns { flex: 1; height: 16px; background: #d4d0c8; text-align: right; padding-right: 87px; border-bottom: 1px solid #808080; }
.status { flex: none; height: 20px; padding: 2px; border-top: 1px solid #fff; }
.status span { display: block; height: 16px; padding-left: 1px; font-size: 13px; line-height: 15px; border: 1px solid; border-color: #808080 #fff #fff #808080; }

.command { display: flex; flex: none; height: 24px; padding: 1px 1px 2px; border-top: 1px solid #808080; font-size: 13px; }
.command label { width: 33.3%; padding: 2px 1px 0 0; text-align: right; border: 1px solid; border-color: #808080 #fff #fff #808080; }
.cmd-box { display: flex; flex: 1; background: #000; margin-left: 2px; border: 1px solid; border-color: #404040 #fff #fff #404040; }
.cmd-box input { flex: 1; border: 0; outline: 0; background: #000; color: #0ee; }
.fkeys { display: flex; flex: none; height: 22px; gap: 2px; padding: 0 1px 1px; }
.fkeys button { flex: 0 0 14.1%; }
.fkeys button:last-child { flex: 1; }

.taskbar { display: flex; flex: none; align-items: center; height: 27px; padding: 1px 1px 1px 2px; border-top: 1px solid #fff; }
.start { width: 52px; height: 22px; gap: 1px; margin-right: 10px; font: bold 11px/16px "DejaVu Sans Condensed", sans-serif; }
.quick { width: 33px; height: 22px; }
.task { width: 32px; height: 23px; margin-right: 2px; }
.task.stacked { justify-content: flex-start; padding-left: 3px; background: linear-gradient(90deg, #d4d0c8 22px, #555 22px, #555 23px, #fff 23px, #fff 24px, #d4d0c8 24px, #d4d0c8 26px, #555 26px, #555 27px, #fff 27px, #fff 28px, #d4d0c8 28px); }
.task.on { background: #fff; border-color: #404040 #fff #fff #404040; box-shadow: none; }
.task.navy { background: #0a246a; }
.desktop, .lang, time { font: 11px/16px "DejaVu Sans Condensed", sans-serif; }
.desktop { margin-right: 8px; }
.more { width: 26px; text-align: center; margin-left: 2px; font-size: 16px; line-height: 20px; padding-bottom: 6px; }
.battery { width: 52px; height: 19px; border-radius: 4px; border: 1px solid #222; background: linear-gradient(#555, #000 50%); color: #fff; text-align: center; font: 14px/17px "DejaVu Sans Condensed", sans-serif; margin-right: 10px; }
.lang { margin-right: 7px; }
.tray { display: flex; align-items: center; gap: 8px; height: 23px; padding: 0 3px 0 7px; border: 1px solid; border-color: #808080 #fff #fff #808080; }
.tray time { margin: 0 0 0 4px; }

.dialog { position: absolute; left: 526px; top: 215px; width: 727px; padding: 1px 2px 2px; background: #d4d0c8; border: 1px solid; border-color: #fff #404040 #404040 #fff; box-shadow: inset -1px -1px 0 #808080; font: 11px/14px "DejaVu Sans Condensed", "DejaVu Sans", sans-serif; }
.dialog header { display: flex; align-items: center; height: 18px; padding: 0 1px 0 2px; background: linear-gradient(90deg, #0a246a, #a6caf0); color: #fff; }
.options { display: flex; align-items: flex-start; padding: 17px 14px 0 15px; }
fieldset { width: 105px; height: 61px; margin: 0 11px 0 0; padding: 3px 0 0 5px; border: 1px solid #808080; box-shadow: inset 0 -1px 0 #f4f2ee, 1px 0 0 #fff; min-width: 0; }
legend { padding: 0 2px; }
fieldset label { display: flex; align-items: center; height: 19px; gap: 4px; }
input[type="radio"] { appearance: none; width: 12px; height: 12px; flex: none; border: 1px solid; border-color: #606060 #f4f4f4 #f4f4f4 #606060; border-radius: 50%; background: #fff; }
input[type="radio"]:checked { background: radial-gradient(circle, #000 2px, #fff 3px); }
.paths { flex: 1; display: grid; grid-template-columns: 1fr 76px; gap: 9px 10px; margin-left: 10px; padding-top: 2px; }
.paths input { width: 100%; height: 22px; padding: 0 4px; background: #fff; border: 1px solid; border-color: #808080 #fff #fff #808080; box-shadow: inset 1px 1px 0 #404040; outline: 0; }
.paths button, .run > .b3:last-child { height: 24px; }
.focus { border: 1px solid #000; box-shadow: inset 1px 1px 0 #fff, inset -1px -1px 0 #404040, inset -2px -2px 0 #808080; padding: 3px; }
.focus span { flex: 1; border: 1px dotted #000; line-height: 14px; }
.run { display: flex; align-items: center; padding: 25px 14px 11px 10px; }
.proceed { width: 91px; height: 29px; background: #f00; color: #400000; font: bold 16px/20px "Liberation Sans", sans-serif; }
.bar { flex: 1; height: 10px; margin: 0 9px 0 10px; border: 1px solid; border-color: #808080 #fff #fff #808080; padding: 1px; }
.bar div { height: 100%; background: #0a246a; }
.count { width: 119px; }
.run > .b3:last-child { width: 76px; }
.output { display: flex; background: #fff; border: 1px solid; border-color: #404040 #fff #fff #404040; padding: 1px; }
.output ul { flex: 1; padding: 1px 0 0; }
.output li { height: 13px; line-height: 13px; }
.nub { height: 8px; }

.mark { position: absolute; right: 9px; bottom: 0; width: 82px; height: 100px; border-radius: 8px 8px 0 0; background: linear-gradient(rgba(255, 255, 255, .4), rgba(255, 255, 255, .55) 60%, rgba(255, 255, 255, .3)); display: flex; flex-direction: column; align-items: center; padding-top: 3px; color: #555; font: 10px/14px "Liberation Sans", sans-serif; pointer-events: none; }
.mark svg { width: 66px; height: 64px; }
</style>
